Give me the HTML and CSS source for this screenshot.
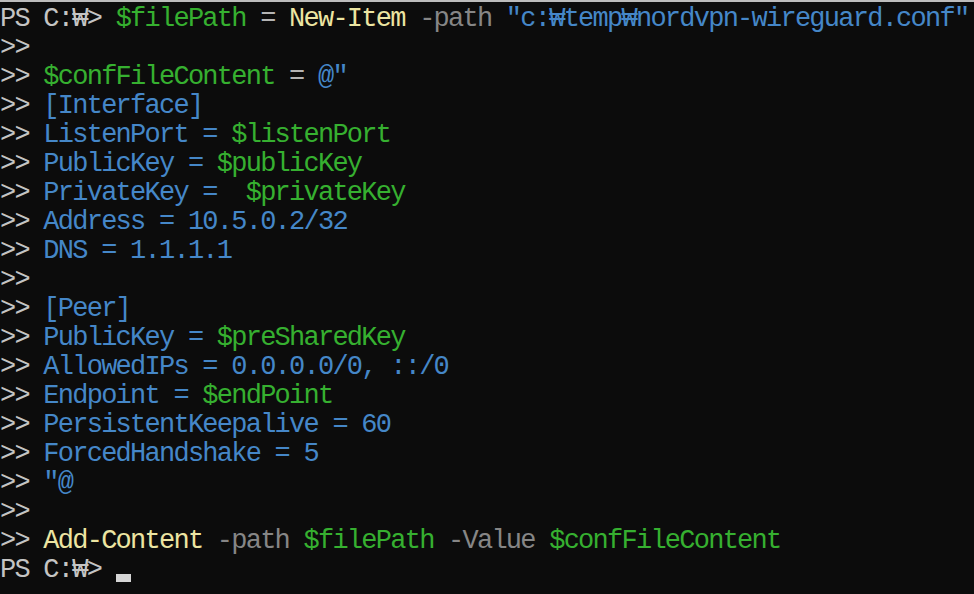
FILE: index.html
```html
<!DOCTYPE html>
<html lang="ko">
<head>
<meta charset="utf-8">
<title>PowerShell</title>
<link rel="stylesheet" href="styles.css">
</head>
<body>
<main class="term">
<div class="line"><span class="p">PS C:₩&gt; </span><span class="v">$filePath</span><span class="o"> = </span><span class="c">New-Item</span><span class="k"> -path </span><span class="s">"c:₩temp₩nordvpn-wireguard.conf"</span></div>
<div class="line"><span class="p">&gt;&gt;</span></div>
<div class="line"><span class="p">&gt;&gt; </span><span class="v">$confFileContent</span><span class="o"> = </span><span class="s">@"</span></div>
<div class="line"><span class="p">&gt;&gt; </span><span class="s">[Interface]</span></div>
<div class="line"><span class="p">&gt;&gt; </span><span class="s">ListenPort = </span><span class="v">$listenPort</span></div>
<div class="line"><span class="p">&gt;&gt; </span><span class="s">PublicKey = </span><span class="v">$publicKey</span></div>
<div class="line"><span class="p">&gt;&gt; </span><span class="s">PrivateKey =  </span><span class="v">$privateKey</span></div>
<div class="line"><span class="p">&gt;&gt; </span><span class="s">Address = 10.5.0.2/32</span></div>
<div class="line"><span class="p">&gt;&gt; </span><span class="s">DNS = 1.1.1.1</span></div>
<div class="line"><span class="p">&gt;&gt;</span></div>
<div class="line"><span class="p">&gt;&gt; </span><span class="s">[Peer]</span></div>
<div class="line"><span class="p">&gt;&gt; </span><span class="s">PublicKey = </span><span class="v">$preSharedKey</span></div>
<div class="line"><span class="p">&gt;&gt; </span><span class="s">AllowedIPs = 0.0.0.0/0, ::/0</span></div>
<div class="line"><span class="p">&gt;&gt; </span><span class="s">Endpoint = </span><span class="v">$endPoint</span></div>
<div class="line"><span class="p">&gt;&gt; </span><span class="s">PersistentKeepalive = 60</span></div>
<div class="line"><span class="p">&gt;&gt; </span><span class="s">ForcedHandshake = 5</span></div>
<div class="line"><span class="p">&gt;&gt; </span><span class="s">"@</span></div>
<div class="line"><span class="p">&gt;&gt;</span></div>
<div class="line"><span class="p">&gt;&gt; </span><span class="c">Add-Content</span><span class="k"> -path </span><span class="v">$filePath</span><span class="k"> -Value </span><span class="v">$confFileContent</span></div>
<div class="line"><span class="p">PS C:₩&gt; </span><span class="cursor"></span></div>
</main>
</body>
</html>
```

FILE: styles.css
```css
html, body {
  margin: 0;
  padding: 0;
  background: #0c0c0c;
}

.term {
  box-sizing: border-box;
  width: 974px;
  height: 594px;
  border-top: 2px solid #bcbcbc;
  padding: 3px 0 0 0;
  background: #0c0c0c;
  color: #c4c4c4;
  font-family: "Liberation Mono", "DejaVu Sans Mono", monospace;
  font-size: 27px;
  letter-spacing: -1.75px;
  overflow: hidden;
}

.line {
  height: 29px;
  line-height: 29px;
  white-space: pre;
}

.p { color: #c4c4c4; }
.v { color: #36b030; }
.o { color: #b4b4b4; }
.c { color: #ece5a2; }
.k { color: #868686; }
.s { color: #4587c8; }

.cursor {
  display: inline-block;
  width: 15px;
  height: 8px;
  background: #d6d6d6;
  vertical-align: -5px;
}
```
